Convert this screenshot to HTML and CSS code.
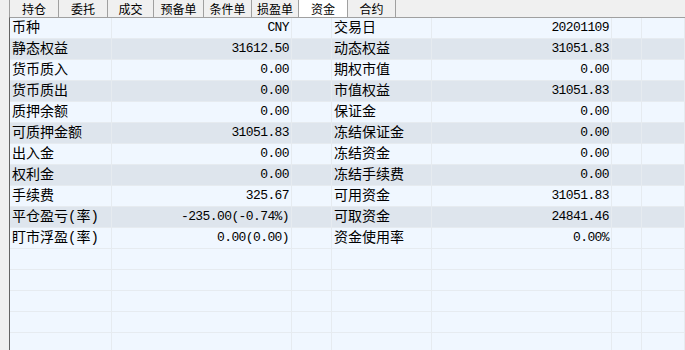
FILE: index.html
```html
<!DOCTYPE html>
<html lang="zh-CN">
<head>
<meta charset="utf-8">
<link rel="stylesheet" href="styles.css">
</head>
<body>
<div class="app">
  <div class="gutter"></div>
  <div class="main">
    <div class="tabs">
      <div class="tab w49">持仓</div>
      <div class="tab w49">委托</div>
      <div class="tab w46">成交</div>
      <div class="tab w50">预备单</div>
      <div class="tab w48">条件单</div>
      <div class="tab w47">损盈单</div>
      <div class="tab w49 active">资金</div>
      <div class="tab w48">合约</div>
    </div>
    <div class="grid">
      <div class="row light"><div class="c lbl">币种</div><div class="c num">CNY</div><div class="c"></div><div class="c lbl">交易日</div><div class="c num">20201109</div><div class="c"></div><div class="c"></div></div>
      <div class="row dark"><div class="c lbl">静态权益</div><div class="c num">31612.50</div><div class="c"></div><div class="c lbl">动态权益</div><div class="c num">31051.83</div><div class="c"></div><div class="c"></div></div>
      <div class="row light"><div class="c lbl">货币质入</div><div class="c num">0.00</div><div class="c"></div><div class="c lbl">期权市值</div><div class="c num">0.00</div><div class="c"></div><div class="c"></div></div>
      <div class="row dark"><div class="c lbl">货币质出</div><div class="c num">0.00</div><div class="c"></div><div class="c lbl">市值权益</div><div class="c num">31051.83</div><div class="c"></div><div class="c"></div></div>
      <div class="row light"><div class="c lbl">质押余额</div><div class="c num">0.00</div><div class="c"></div><div class="c lbl">保证金</div><div class="c num">0.00</div><div class="c"></div><div class="c"></div></div>
      <div class="row dark"><div class="c lbl">可质押金额</div><div class="c num">31051.83</div><div class="c"></div><div class="c lbl">冻结保证金</div><div class="c num">0.00</div><div class="c"></div><div class="c"></div></div>
      <div class="row light"><div class="c lbl">出入金</div><div class="c num">0.00</div><div class="c"></div><div class="c lbl">冻结资金</div><div class="c num">0.00</div><div class="c"></div><div class="c"></div></div>
      <div class="row dark"><div class="c lbl">权利金</div><div class="c num">0.00</div><div class="c"></div><div class="c lbl">冻结手续费</div><div class="c num">0.00</div><div class="c"></div><div class="c"></div></div>
      <div class="row light"><div class="c lbl">手续费</div><div class="c num">325.67</div><div class="c"></div><div class="c lbl">可用资金</div><div class="c num">31051.83</div><div class="c"></div><div class="c"></div></div>
      <div class="row dark"><div class="c lbl">平仓盈亏(率)</div><div class="c num">-235.00(-0.74%)</div><div class="c"></div><div class="c lbl">可取资金</div><div class="c num">24841.46</div><div class="c"></div><div class="c"></div></div>
      <div class="row light"><div class="c lbl">盯市浮盈(率)</div><div class="c num">0.00(0.00)</div><div class="c"></div><div class="c lbl">资金使用率</div><div class="c num">0.00%</div><div class="c"></div><div class="c"></div></div>
      <div class="row light"><div class="c"></div><div class="c"></div><div class="c"></div><div class="c"></div><div class="c"></div><div class="c"></div><div class="c"></div></div>
      <div class="row light"><div class="c"></div><div class="c"></div><div class="c"></div><div class="c"></div><div class="c"></div><div class="c"></div><div class="c"></div></div>
      <div class="row light"><div class="c"></div><div class="c"></div><div class="c"></div><div class="c"></div><div class="c"></div><div class="c"></div><div class="c"></div></div>
      <div class="row light"><div class="c"></div><div class="c"></div><div class="c"></div><div class="c"></div><div class="c"></div><div class="c"></div><div class="c"></div></div>
      <div class="row light"><div class="c"></div><div class="c"></div><div class="c"></div><div class="c"></div><div class="c"></div><div class="c"></div><div class="c"></div></div>
    </div>
  </div>
</div>
</body>
</html>
```
FILE: styles.css
```css
html, body {
  margin: 0;
  padding: 0;
  background: #f0f0f0;
  overflow: hidden;
}
.app {
  display: flex;
  width: 685px;
  height: 350px;
  overflow: hidden;
}
.gutter {
  width: 9px;
  flex: none;
  background: #f0f0f0;
}
.main {
  flex: 1;
  display: flex;
  flex-direction: column;
  min-width: 0;
}
.tabs {
  display: flex;
  height: 17px;
  border-left: 1px solid #a0a0a0;
  background: #f0f0f0;
}
.tab {
  box-sizing: border-box;
  height: 17px;
  border-right: 1px solid #a0a0a0;
  font-family: "Noto Sans CJK SC", sans-serif;
  font-size: 12px;
  line-height: 17px;
  text-align: center;
  color: #000;
}
.tab.active { background: #ffffff; }
.w46 { width: 46px; }
.w47 { width: 47px; }
.w48 { width: 48px; }
.w49 { width: 49px; }
.w50 { width: 50px; }
.grid {
  border-top: 1px solid #a0a0a0;
  border-left: 1px solid #646464;
  flex: 1;
  background: #f0f7ff;
}
.row {
  display: grid;
  grid-template-columns: 102px 180px 40px 100px 180px 30px 1fr;
  height: 21px;
}
.row.light { background: #f0f7ff; }
.row.dark { background: #dee5ed; }
.c {
  box-sizing: border-box;
  height: 21px;
  border-right: 1px solid #e6ebf0;
  border-bottom: 1px solid #e6ebf0;
  overflow: hidden;
  white-space: nowrap;
  color: #000;
}
.lbl {
  font-family: "Liberation Mono", "Noto Sans CJK SC", monospace;
  font-size: 14px;
  line-height: 20px;
  padding-left: 2px;
}
.num {
  font-family: "Liberation Mono", monospace;
  font-size: 13px;
  letter-spacing: -0.6px;
  line-height: 20px;
  text-align: right;
  padding-right: 2px;
}
```
